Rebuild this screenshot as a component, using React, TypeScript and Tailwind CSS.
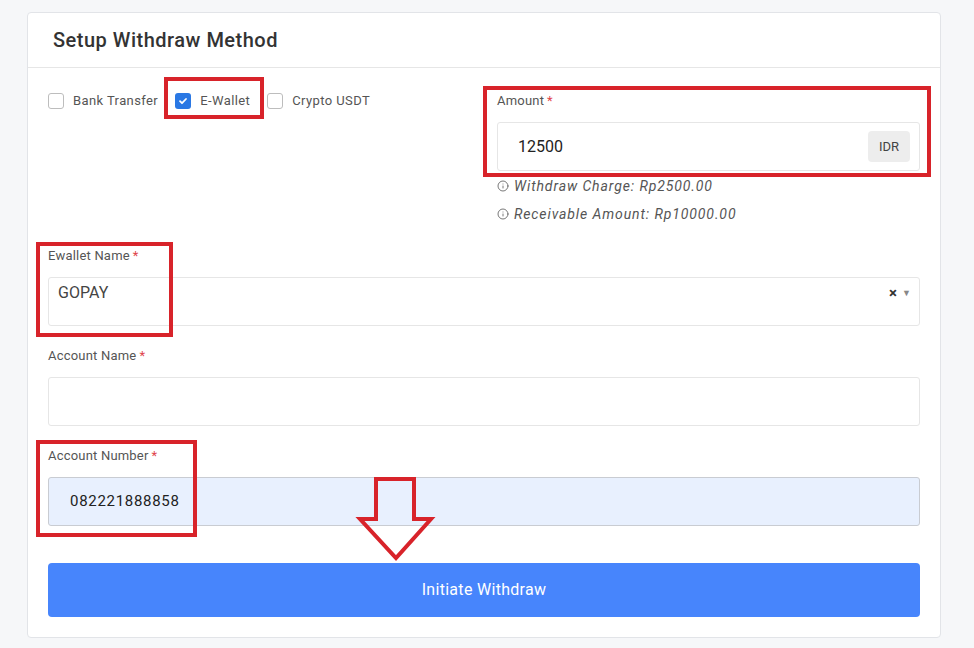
import { Info } from "lucide-react";

function Label({ text }: { text: string }) {
  return (
    <div className="mb-[13px] h-[16px] text-[13px] leading-[16px] tracking-[0.2px] text-[#555]">
      {text}
      <span className="ml-[3px] text-[#e0454b]">*</span>
    </div>
  );
}

function Check({ label, checked }: { label: string; checked?: boolean }) {
  return (
    <label className="flex items-center gap-[9px] text-[13px] leading-[16px] tracking-[0.4px] text-[#555]">
      {checked ? (
        <span className="flex h-[16px] w-[16px] items-center justify-center rounded-[3px] bg-[#2a78e4]">
          <svg width="10" height="10" viewBox="0 0 10 10" fill="none">
            <path d="M2 5.2l2 2L8 3" stroke="white" strokeWidth="1.8" strokeLinecap="round" strokeLinejoin="round" />
          </svg>
        </span>
      ) : (
        <span className="h-[16px] w-[16px] rounded-[3px] border border-[#bdbdbd] bg-white" />
      )}
      {label}
    </label>
  );
}

export default function App() {
  return (
    <div className="relative h-[648px] w-[974px] overflow-hidden bg-[#f6f7f9] pl-[27px] pt-[12px] font-['Roboto',sans-serif]">
      <div className="w-[914px] rounded-[4px] border border-[#e2e4e8] bg-white">
        <div className="flex h-[55px] items-center border-b border-[#e6e6e6] px-[25px]">
          <h1 className="text-[20px] font-medium tracking-[0.5px] text-[#333]">Setup Withdraw Method</h1>
        </div>

        <div className="px-[20px] pb-[20px] pt-[25px]">
          <div className="grid grid-cols-2 gap-[26px]">
            <div className="flex items-start gap-[17px]">
              <Check label="Bank Transfer" />
              <Check label="E-Wallet" checked />
              <Check label="Crypto USDT" />
            </div>
            <div>
              <Label text="Amount" />
              <div className="flex h-[49px] items-center justify-between rounded-[3px] border border-[#e6e6e6] pl-[20px] pr-[9px]">
                <span className="text-[16px] text-[#222]">12500</span>
                <span className="flex h-[31px] w-[42px] items-center justify-center rounded-[4px] bg-[#ededed] text-[13px] text-[#444]">
                  IDR
                </span>
              </div>
              <div className="mt-[1px] text-[14px] italic leading-[28px] tracking-[0.9px] text-[#555]">
                <div className="flex items-center gap-[5px]">
                  <Info size={12} strokeWidth={1.6} />
                  Withdraw Charge: Rp2500.00
                </div>
                <div className="flex items-center gap-[5px]">
                  <Info size={12} strokeWidth={1.6} />
                  Receivable Amount: Rp10000.00
                </div>
              </div>
            </div>
          </div>

          <div className="mt-[20px]">
            <Label text="Ewallet Name" />
            <div className="flex h-[49px] items-start justify-between rounded-[3px] border border-[#e6e6e6] pl-[9px] pr-[8px] pt-[3px]">
              <span className="text-[16px] text-[#444]">GOPAY</span>
              <span className="flex items-center gap-[5px] pt-[5px] text-[#333]">
                <span className="text-[15px] font-bold leading-none">×</span>
                <span className="text-[9px] leading-none text-[#888]">▼</span>
              </span>
            </div>
          </div>

          <div className="mt-[22px]">
            <Label text="Account Name" />
            <div className="h-[49px] rounded-[3px] border border-[#e6e6e6]" />
          </div>

          <div className="mt-[22px]">
            <Label text="Account Number" />
            <div className="flex h-[49px] items-center rounded-[3px] border border-[#c9ccd2] bg-[#e8f0fe] pl-[21px] text-[15px] tracking-[0.7px] text-[#222]">
              082221888858
            </div>
          </div>

          <button className="mt-[37px] flex h-[54px] w-full items-center justify-center rounded-[4px] bg-[#4785fc] text-[16px] tracking-[0.3px] text-white">
            Initiate Withdraw
          </button>
        </div>
      </div>

      <div className="absolute left-[164px] top-[77px] h-[42px] w-[100px] border-4 border-[#d8232a]" />
      <div className="absolute left-[483px] top-[86px] h-[91px] w-[448px] border-4 border-[#d8232a]" />
      <div className="absolute left-[36px] top-[242px] h-[95px] w-[137px] border-4 border-[#d8232a]" />
      <div className="absolute left-[36px] top-[440px] h-[97px] w-[161px] border-4 border-[#d8232a]" />
      <svg className="absolute left-[355px] top-[474px]" width="82" height="88" viewBox="0 0 82 88" fill="none">
        <polygon points="21,5 59,5 59,45 76,45 41,84 5,45 21,45" stroke="#d8232a" strokeWidth="4" />
      </svg>
    </div>
  );
}
